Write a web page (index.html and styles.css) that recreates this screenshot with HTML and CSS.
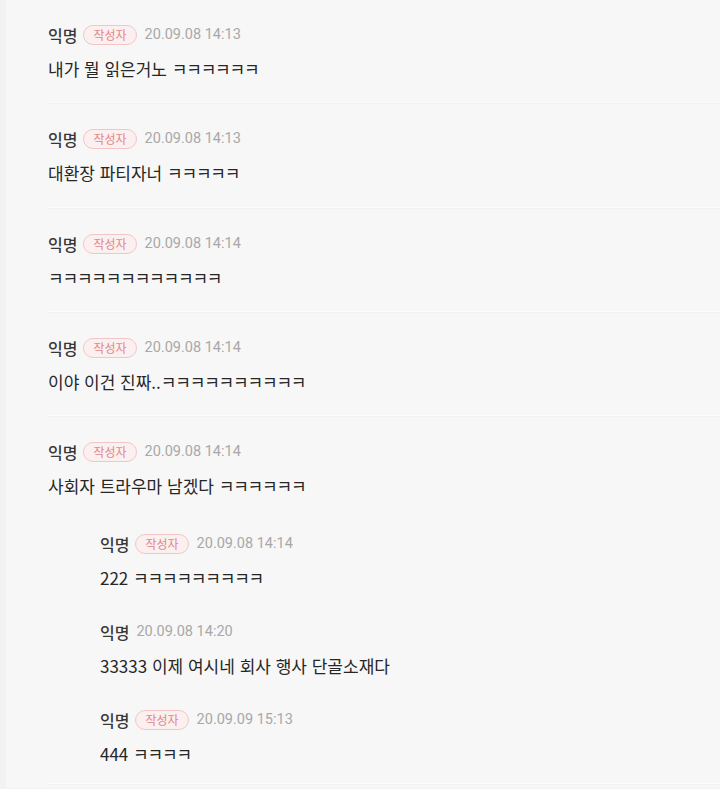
FILE: index.html
```html
<!DOCTYPE html>
<html lang="ko">
<head>
<meta charset="utf-8">
<link rel="stylesheet" href="styles.css">
</head>
<body>
<div class="page">
  <div class="comment">
    <div class="meta"><span class="name">익명</span><span class="badge">작성자</span><span class="date">20.09.08 14:13</span></div>
    <div class="text">내가 뭘 읽은거노 <span class="kk">ㅋㅋㅋㅋㅋㅋ</span></div>
  </div>
  <div class="comment">
    <div class="meta"><span class="name">익명</span><span class="badge">작성자</span><span class="date">20.09.08 14:13</span></div>
    <div class="text">대환장 파티자너 <span class="kk">ㅋㅋㅋㅋㅋ</span></div>
  </div>
  <div class="comment">
    <div class="meta"><span class="name">익명</span><span class="badge">작성자</span><span class="date">20.09.08 14:14</span></div>
    <div class="text"><span class="kk">ㅋㅋㅋㅋㅋㅋㅋㅋㅋㅋㅋㅋ</span></div>
  </div>
  <div class="comment">
    <div class="meta"><span class="name">익명</span><span class="badge">작성자</span><span class="date">20.09.08 14:14</span></div>
    <div class="text">이야 이건 진짜..<span class="kk">ㅋㅋㅋㅋㅋㅋㅋㅋㅋㅋ</span></div>
  </div>
  <div class="comment has-replies">
    <div class="meta"><span class="name">익명</span><span class="badge">작성자</span><span class="date">20.09.08 14:14</span></div>
    <div class="text">사회자 트라우마 남겠다 <span class="kk">ㅋㅋㅋㅋㅋㅋ</span></div>
    <div class="replies">
      <div class="reply">
        <div class="meta"><span class="name">익명</span><span class="badge">작성자</span><span class="date">20.09.08 14:14</span></div>
        <div class="text">222 <span class="kk">ㅋㅋㅋㅋㅋㅋㅋㅋㅋ</span></div>
      </div>
      <div class="reply">
        <div class="meta"><span class="name">익명</span><span class="date">20.09.08 14:20</span></div>
        <div class="text">33333 이제 여시네 회사 행사 단골소재다</div>
      </div>
      <div class="reply">
        <div class="meta"><span class="name">익명</span><span class="badge">작성자</span><span class="date">20.09.09 15:13</span></div>
        <div class="text">444 <span class="kk">ㅋㅋㅋㅋ</span></div>
      </div>
    </div>
  </div>
</div>
</body>
</html>
```
FILE: styles.css
```css
html, body {
  margin: 0;
  padding: 0;
  background: #f2f2f2;
}
body {
  font-family: "Noto Sans CJK KR", "Noto Sans", sans-serif;
  color: #222;
  height: 789px;
  overflow: hidden;
}
.page {
  margin-left: 6px;
  background: #f7f7f7;
  min-height: 789px;
  margin-top: -1px;
}
.comment {
  margin-left: 42px;
  padding: 26px 0 23.25px;
  border-bottom: 1px solid #fbfbfb;
  box-shadow: 0 1px 0 #f1f1f1;
}
.meta {
  display: flex;
  align-items: center;
  height: 20px;
}
.name {
  font-size: 16px;
  font-weight: 500;
  color: #383838;
  line-height: 20px;
}
.badge {
  margin-left: 6px;
  height: 20px;
  box-sizing: border-box;
  padding: 0 9px;
  border: 1px solid #f1c6c6;
  border-radius: 10px;
  background: #fcefef;
  color: #e28787;
  font-size: 12px;
  line-height: 18px;
}
.date {
  margin-left: 8px;
  font-family: Roboto, "Noto Sans", sans-serif;
  font-size: 14.5px;
  color: #a8a8a8;
  line-height: 20px;
}
.name + .date {
  margin-left: 7px;
}
.text {
  margin-top: 14px;
  font-size: 17px;
  line-height: 20px;
  color: #262626;
}
.kk {
  letter-spacing: -1.2px;
}
.has-replies {
  padding-bottom: 19px;
}
.replies {
  display: flex;
  flex-direction: column;
  gap: 34px;
  padding: 38px 0 0 52px;
}
```
